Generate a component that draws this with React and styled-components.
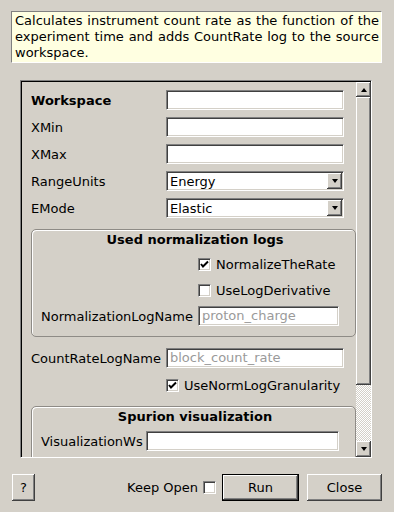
import React from 'react'
import styled, { createGlobalStyle } from 'styled-components'

const GlobalStyle = createGlobalStyle`
  html, body {
    margin: 0;
    padding: 0;
    background: #d4d0c8;
  }
  body {
    font-family: "DejaVu Sans", "Liberation Sans", sans-serif;
    font-size: 13px;
    color: #000;
  }
`

const sunken = `
  border-style: solid;
  border-width: 1px;
  border-color: #808080 #fff #fff #808080;
  box-shadow: inset 1px 1px #404040, inset -1px -1px #d4d0c8;
`

const raised = `
  box-shadow: inset -1px -1px #404040, inset 1px 1px #fff, inset -2px -2px #808080, inset 2px 2px #d4d0c8;
`

const Dialog = styled.div`
  width: 394px;
  height: 512px;
  box-sizing: border-box;
  padding: 11px 12px 0 11px;
  display: flex;
  flex-direction: column;
`

const Description = styled.div`
  height: 52px;
  box-sizing: border-box;
  background: #ffffe1;
  border-style: solid;
  border-width: 1px;
  border-color: #808080 #fff #fff #808080;
  padding: 1px 2px 0 3px;
  line-height: 16px;
  overflow: hidden;
`

const Line = styled.span`
  display: block;
  white-space: nowrap;
  text-align: justify;
  text-align-last: ${(p) => (p.last ? 'left' : 'justify')};
`

const ScrollFrame = styled.div`
  margin: 17px 0 0 9px;
  width: 352px;
  height: 378px;
  box-sizing: border-box;
  border-style: solid;
  border-width: 1px;
  border-color: #808080 #fff #fff #808080;
  box-shadow: inset 1px 1px #000;
  display: flex;
  overflow: hidden;
`

const Content = styled.div`
  flex: 1;
  overflow: hidden;
  padding: 9px 0 0 10px;
  display: grid;
  grid-template-columns: 135px 1fr;
  grid-auto-rows: min-content;
  row-gap: 7px;
  align-items: center;
  align-content: start;
`

const Label = styled.div`
  font-weight: ${(p) => (p.bold ? 'bold' : 'normal')};
  white-space: nowrap;
`

const Field = styled.div`
  margin-right: ${(p) => p.mr ?? 12}px;
  height: 20px;
  display: flex;
  align-items: center;
`

const TextInput = styled.div`
  flex: 1;
  height: 20px;
  box-sizing: border-box;
  background: #fff;
  ${sunken}
  padding: 0 3px;
  line-height: 18px;
  color: #9a9a9a;
  white-space: nowrap;
  overflow: hidden;
`

const Combo = styled.div`
  flex: 1;
  height: 20px;
  box-sizing: border-box;
  background: #fff;
  ${sunken}
  display: flex;
  align-items: center;
  padding: 1px 1px 1px 3px;
`

const ComboText = styled.span`
  flex: 1;
`

const ArrowButton = styled.div`
  width: ${(p) => p.w || 15}px;
  height: ${(p) => p.h || 16}px;
  flex: none;
  background: #d4d0c8;
  ${raised}
  display: flex;
  align-items: center;
  justify-content: center;
`

const Triangle = styled.div`
  width: 0;
  height: 0;
  border-left: 3.5px solid transparent;
  border-right: 3.5px solid transparent;
  ${(p) => (p.up ? 'border-bottom: 4px solid #000;' : 'border-top: 4px solid #000;')}
`

const CheckRow = styled.div`
  display: flex;
  align-items: center;
  gap: 5px;
  height: 20px;
  white-space: nowrap;
`

const Box = styled.div`
  width: 13px;
  height: 13px;
  box-sizing: border-box;
  background: #fff;
  ${sunken}
  display: flex;
  align-items: center;
  justify-content: center;
  flex: none;
`

const Group = styled.div`
  grid-column: 1 / -1;
  margin: 4px 0;
  border: 1px solid #8e8b86;
  border-radius: 5px;
  box-shadow: inset 1px 1px #fff;
  padding: 0 0 10px 9px;
  display: grid;
  grid-template-columns: ${(p) => p.labelWidth}px 1fr;
  row-gap: 6px;
  align-items: center;
`

const GroupTitle = styled.div`
  grid-column: 1 / -1;
  height: 18px;
  line-height: 19px;
  text-align: center;
  font-weight: bold;
  padding-right: 6px;
`

const Scrollbar = styled.div`
  width: 15px;
  flex: none;
  display: flex;
  flex-direction: column;
  margin-top: 1px;
`

const Thumb = styled.div`
  height: 288px;
  background: #d4d0c8;
  ${raised}
`

const Track = styled.div`
  flex: 1;
  background: repeating-conic-gradient(#fff 0 25%, #d4d0c8 0 50%) 0 0 / 2px 2px;
`

const ButtonRow = styled.div`
  margin-top: 16px;
  margin-left: 1px;
  height: 27px;
  display: flex;
  align-items: center;
`

const Button = styled.div`
  width: ${(p) => p.w}px;
  height: 27px;
  box-sizing: border-box;
  background: #d4d0c8;
  display: flex;
  align-items: center;
  justify-content: center;
  margin-left: ${(p) => p.ml || 0}px;
  ${(p) =>
    p.primary
      ? `border: 1px solid #000; box-shadow: inset -1px -1px #404040, inset 1px 1px #fff, inset -2px -2px #808080;`
      : raised}
`

const Spacer = styled.div`
  flex: 1;
`

const KeepLabel = styled.span`
  margin-right: 5px;
`

const Check = ({ checked }) => (
  <Box>
    {checked && (
      <svg width="9" height="9" viewBox="0 0 9 9">
        <path d="M1 4 L3 6.5 L8 1.5" fill="none" stroke="#000" strokeWidth="2" />
      </svg>
    )}
  </Box>
)

const Input = ({ placeholder, mr }) => (
  <Field mr={mr}>
    <TextInput>{placeholder}</TextInput>
  </Field>
)

const Select = ({ value }) => (
  <Field>
    <Combo>
      <ComboText>{value}</ComboText>
      <ArrowButton w={15} h={16}>
        <Triangle />
      </ArrowButton>
    </Combo>
  </Field>
)

export default function App() {
  return (
    <Dialog>
      <GlobalStyle />
      <Description>
        <Line>Calculates instrument count rate as the function of the</Line>
        <Line>experiment time and adds CountRate log to the source</Line>
        <Line last>workspace.</Line>
      </Description>

      <ScrollFrame>
        <Content>
          <Label bold>Workspace</Label>
          <Input />
          <Label>XMin</Label>
          <Input />
          <Label>XMax</Label>
          <Input />
          <Label>RangeUnits</Label>
          <Select value="Energy" />
          <Label>EMode</Label>
          <Select value="Elastic" />

          <Group labelWidth={157}>
            <GroupTitle>Used normalization logs</GroupTitle>
            <div />
            <CheckRow>
              <Check checked />
              NormalizeTheRate
            </CheckRow>
            <div />
            <CheckRow>
              <Check />
              UseLogDerivative
            </CheckRow>
            <Label>NormalizationLogName</Label>
            <Input placeholder="proton_charge" mr={16} />
          </Group>

          <Label>CountRateLogName</Label>
          <Input placeholder="block_count_rate" />
          <div />
          <CheckRow>
            <Check checked />
            UseNormLogGranularity
          </CheckRow>

          <Group labelWidth={105}>
            <GroupTitle>Spurion visualization</GroupTitle>
            <Label>VisualizationWs</Label>
            <Input mr={16} />
          </Group>
        </Content>

        <Scrollbar>
          <ArrowButton w={15} h={15}>
            <Triangle up />
          </ArrowButton>
          <Thumb />
          <Track />
          <ArrowButton w={15} h={16}>
            <Triangle />
          </ArrowButton>
        </Scrollbar>
      </ScrollFrame>

      <ButtonRow>
        <Button w={23}>?</Button>
        <Spacer />
        <KeepLabel>Keep Open</KeepLabel>
        <Check />
        <Button w={77} ml={6} primary>
          Run
        </Button>
        <Button w={75} ml={8}>
          Close
        </Button>
      </ButtonRow>
    </Dialog>
  )
}
